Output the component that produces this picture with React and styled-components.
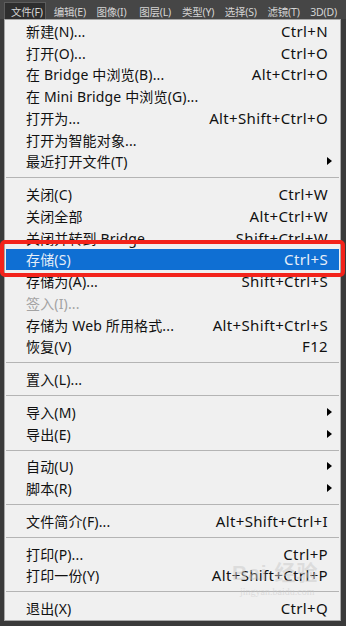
import React from "react";
import styled, { createGlobalStyle } from "styled-components";

const Global = createGlobalStyle`
  html, body { margin: 0; padding: 0; background: #3a3a3a; }
  body { width: 346px; height: 626px; overflow: hidden; }
  * { box-sizing: border-box; }
`;

const Page = styled.div`
  position: relative;
  width: 346px;
  height: 626px;
  background: #3a3a3a;
  font-family: "Noto Sans", "Noto Sans CJK SC", sans-serif;
  overflow: hidden;
`;

const MenuBar = styled.div`
  display: flex;
  height: 19px;
  padding-left: 4px;
  background: #464646;
`;

const BarItem = styled.div`
  width: 42px;
  margin-right: 1px;
  padding-left: 6px;
  padding-top: 1px;
  font-size: 10.5px;
  line-height: 16px;
  color: #d4d4d4;
  white-space: nowrap;
  background: ${(p) => (p.$active ? "#2e2e2e" : "transparent")};
  border: 1px solid ${(p) => (p.$active ? "#5c5c5c" : "transparent")};
  border-bottom: none;
  margin-top: 2px;
  letter-spacing: -0.2px;
`;

const Menu = styled.div`
  margin-left: 4px;
  width: 337px;
  background: #f0f0f0;
  border: 1px solid #a8a8a8;
  padding: 0 0 1px 0;
  display: flex;
  flex-direction: column;
`;

const Row = styled.div`
  display: flex;
  align-items: center;
  justify-content: space-between;
  height: 21.75px;
  margin: 0 1px;
  padding: 0 11px 0 20px;
  font-size: 14px;
  white-space: nowrap;
  color: ${(p) => (p.$disabled ? "#a3a3a3" : p.$active ? "#e6eef8" : "#111")};
  background: ${(p) => (p.$active ? "#0f6fd3" : "transparent")};
`;

const Label = styled.span`
  letter-spacing: 0.15px;
`;

const Shortcut = styled.span`
  font-size: 15px;
  letter-spacing: 0.35px;
`;

const Arrow = styled.span`
  width: 0;
  height: 0;
  margin-right: -4px;
  border-left: 5px solid #000;
  border-top: 4px solid transparent;
  border-bottom: 4px solid transparent;
`;

const Separator = styled.div`
  height: 11px;
  display: flex;
  align-items: center;
  padding: 0 1px;
  &::after {
    content: "";
    flex: 1;
    height: 1px;
    background: #b4b4b4;
  }
`;

const RedBox = styled.div`
  position: absolute;
  left: 0;
  top: 240px;
  width: 345px;
  height: 37px;
  border: 4px solid #f3231b;
  border-radius: 5px;
  pointer-events: none;
`;

const Watermark = styled.div`
  position: absolute;
  left: 232px;
  top: 562px;
  color: rgba(200, 200, 200, 0.5);
  font-family: "Liberation Sans", "Noto Sans CJK SC", sans-serif;
  line-height: 1;
  pointer-events: none;
`;

const WmBig = styled.div`
  font-size: 21px;
  font-weight: bold;
  letter-spacing: 1px;
`;

const WmSmall = styled.div`
  font-family: "Liberation Serif", serif;
  font-size: 10px;
  margin-top: 4px;
  margin-left: 8px;
`;

const bar = ["文件(F)", "编辑(E)", "图像(I)", "图层(L)", "类型(Y)", "选择(S)", "滤镜(T)", "3D(D)"];

const items = [
  ["新建(N)...", "Ctrl+N"],
  ["打开(O)...", "Ctrl+O"],
  ["在 Bridge 中浏览(B)...", "Alt+Ctrl+O"],
  ["在 Mini Bridge 中浏览(G)...", ""],
  ["打开为...", "Alt+Shift+Ctrl+O"],
  ["打开为智能对象...", ""],
  ["最近打开文件(T)", ">"],
  "-",
  ["关闭(C)", "Ctrl+W"],
  ["关闭全部", "Alt+Ctrl+W"],
  ["关闭并转到 Bridge...", "Shift+Ctrl+W"],
  ["存储(S)", "Ctrl+S", "active"],
  ["存储为(A)...", "Shift+Ctrl+S"],
  ["签入(I)...", "", "disabled"],
  ["存储为 Web 所用格式...", "Alt+Shift+Ctrl+S"],
  ["恢复(V)", "F12"],
  "-",
  ["置入(L)...", ""],
  "-",
  ["导入(M)", ">"],
  ["导出(E)", ">"],
  "-",
  ["自动(U)", ">"],
  ["脚本(R)", ">"],
  "-",
  ["文件简介(F)...", "Alt+Shift+Ctrl+I"],
  "-",
  ["打印(P)...", "Ctrl+P"],
  ["打印一份(Y)", "Alt+Shift+Ctrl+P"],
  "-",
  ["退出(X)", "Ctrl+Q"],
];

export default function App() {
  return (
    <Page>
      <Global />
      <MenuBar>
        {bar.map((b, i) => (
          <BarItem key={b} $active={i === 0}>
            {b}
          </BarItem>
        ))}
      </MenuBar>
      <Menu>
        {items.map((it, i) => {
          if (it === "-") return <Separator key={i} />;
          const [label, sc, state] = it;
          return (
            <Row key={i} $active={state === "active"} $disabled={state === "disabled"}>
              <Label>{label}</Label>
              {sc === ">" ? <Arrow /> : sc ? <Shortcut>{sc}</Shortcut> : null}
            </Row>
          );
        })}
      </Menu>
      <RedBox />
      <Watermark>
        <WmBig>Bai 经验</WmBig>
        <WmSmall>jingyan.baidu.com</WmSmall>
      </Watermark>
    </Page>
  );
}
